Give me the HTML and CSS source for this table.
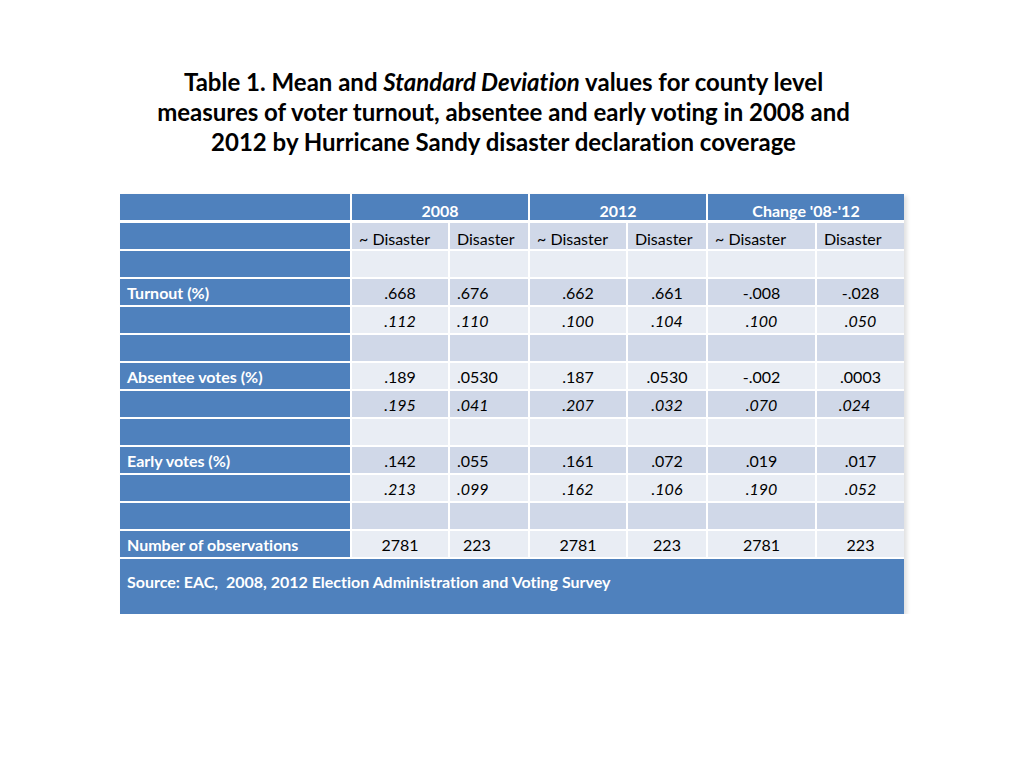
FILE: index.html
```html
<!DOCTYPE html>
<html>
<head>
<meta charset="utf-8">
<link rel="stylesheet" href="styles.css">
</head>
<body>
<h1 class="title">Table 1. Mean and <em>Standard Deviation</em> values for county level<br>measures of voter turnout, absentee and early voting in 2008 and<br>2012 by Hurricane Sandy disaster declaration coverage</h1>
<table class="data">
  <colgroup>
    <col class="c0"><col class="c1"><col class="c2"><col class="c3"><col class="c4"><col class="c5"><col class="c6">
  </colgroup>
  <tr class="head">
    <td class="lab"></td>
    <td colspan="2" class="grp">2008</td>
    <td colspan="2" class="grp">2012</td>
    <td colspan="2" class="grp last">Change '08-'12</td>
  </tr>
  <tr class="dark sub">
    <td class="lab"></td>
    <td class="l">~ Disaster</td><td class="l">Disaster</td>
    <td class="l">~ Disaster</td><td class="l">Disaster</td>
    <td class="l">~ Disaster</td><td class="l">Disaster</td>
  </tr>
  <tr class="light">
    <td class="lab"></td><td></td><td></td><td></td><td></td><td></td><td></td>
  </tr>
  <tr class="dark">
    <td class="lab">Turnout (%)</td>
    <td>.668</td><td class="l">.676</td><td>.662</td><td>.661</td><td>-.008</td><td>-.028</td>
  </tr>
  <tr class="light sd">
    <td class="lab"></td>
    <td>.112</td><td class="l">.110</td><td>.100</td><td>.104</td><td>.100</td><td>.050</td>
  </tr>
  <tr class="dark">
    <td class="lab"></td><td></td><td></td><td></td><td></td><td></td><td></td>
  </tr>
  <tr class="light">
    <td class="lab">Absentee votes (%)</td>
    <td>.189</td><td class="l">.0530</td><td>.187</td><td>.0530</td><td>-.002</td><td>.0003</td>
  </tr>
  <tr class="dark sd">
    <td class="lab"></td>
    <td>.195</td><td class="l">.041</td><td>.207</td><td>.032</td><td>.070</td><td class="nudge">.024</td>
  </tr>
  <tr class="light">
    <td class="lab"></td><td></td><td></td><td></td><td></td><td></td><td></td>
  </tr>
  <tr class="dark">
    <td class="lab">Early votes (%)</td>
    <td>.142</td><td class="l">.055</td><td>.161</td><td>.072</td><td>.019</td><td>.017</td>
  </tr>
  <tr class="light sd">
    <td class="lab"></td>
    <td>.213</td><td class="l">.099</td><td>.162</td><td>.106</td><td>.190</td><td>.052</td>
  </tr>
  <tr class="dark">
    <td class="lab"></td><td></td><td></td><td></td><td></td><td></td><td></td>
  </tr>
  <tr class="light">
    <td class="lab">Number of observations</td>
    <td>2781</td><td class="l wide">223</td><td>2781</td><td>223</td><td>2781</td><td>223</td>
  </tr>
  <tr class="source">
    <td colspan="7">Source: EAC,&nbsp; 2008, 2012 Election Administration and Voting Survey</td>
  </tr>
</table>
</body>
</html>
```
FILE: styles.css
```css
html, body {
  margin: 0;
  padding: 0;
  background: #ffffff;
}
body {
  font-family: Lato, "Open Sans", sans-serif;
  font-variant-ligatures: none;
  color: #000;
}
.title {
  width: 1007px;
  margin: 0;
  padding-top: 67px;
  font-size: 24px;
  line-height: 30px;
  font-weight: 700;
  text-align: center;
  color: #000;
}
.title em {
  font-style: italic;
}
.data {
  margin: 37px 0 0 120px;
  width: 784px;
  table-layout: fixed;
  border-collapse: separate;
  border-spacing: 0;
  font-size: 16px;
  line-height: 19px;
  box-shadow: 3px 2px 4px rgba(0, 0, 0, 0.12);
}
.c0 { width: 230px; }
.c1 { width: 98px; }
.c2 { width: 80px; }
.c3 { width: 98px; }
.c4 { width: 80px; }
.c5 { width: 109px; }
.c6 { width: 89px; }
.data td {
  padding: 0;
  height: 26px;
  border-bottom: 2px solid #ffffff;
  border-left: 2px solid #ffffff;
  text-align: center;
  vertical-align: middle;
  white-space: nowrap;
  overflow: hidden;
}
.data td.lab {
  border-left: none;
  background: #4f81bd;
  color: #ffffff;
  font-weight: 700;
  text-align: left;
  padding-left: 7px;
}
.head td {
  height: 26px;
  border-bottom: 3px solid #ffffff;
  background: #4f81bd;
  color: #ffffff;
  font-weight: 700;
  vertical-align: bottom;
  padding-bottom: 0;
}
.head td.grp {
  border-left: 2px solid #ffffff;
}
.dark td { background: #d0d8e8; }
.light td { background: #e9edf4; }
.sub td { vertical-align: bottom; padding-bottom: 1px; height: 25px; }
.data td.l {
  text-align: left;
  padding-left: 7px;
}
.data td.wide { padding-left: 13px; }
.data td.nudge { padding-right: 12px; }
.sd td { font-style: italic; }
.sd td.lab { font-style: normal; }
.source td {
  height: 55px;
  border: none;
  background: #4f81bd;
  color: #ffffff;
  font-weight: 700;
  text-align: left;
  vertical-align: top;
  padding: 13px 0 0 7px;
  box-sizing: border-box;
}
```
